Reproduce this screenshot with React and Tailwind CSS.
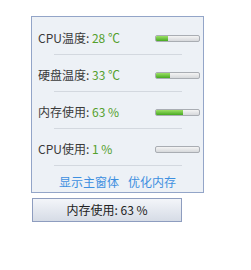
const font = { fontFamily: '"Microsoft YaHei", "Noto Sans CJK SC", "Noto Sans", sans-serif' };

const rows = [
  { label: 'CPU温度', value: '28 ℃', pct: 28 },
  { label: '硬盘温度', value: '33 ℃', pct: 33 },
  { label: '内存使用', value: '63 %', pct: 63 },
  { label: 'CPU使用', value: '1 %', pct: 1 },
];

function Bar({ pct }) {
  return (
    <div className="relative h-[7px] w-[45px] overflow-hidden rounded-[2px] border border-[#a9adb3] bg-gradient-to-b from-[#f4f4f4] to-[#d6d8db]">
      <div
        className="h-full bg-gradient-to-b from-[#9be064] to-[#45a91f]"
        style={{ width: `${pct < 3 ? 0 : pct}%` }}
      />
    </div>
  );
}

export default function App() {
  return (
    <div className="h-[270px] w-[251px] bg-white pl-[31px] pt-[16px] text-[12px]" style={font}>
      <div className="w-[173px] border border-[#93a5c8] bg-[#edf1f6] pt-px">
        {rows.map((r) => (
          <div key={r.label}>
            <div className="flex h-[36px] items-center justify-between pl-[6px] pr-[3px] pt-[4px]">
              <div className="leading-none text-[#3a3a3a]">
                {r.label}: <span className="text-[#54a02c]">{r.value}</span>
              </div>
              <Bar pct={r.pct} />
            </div>
            <div className="ml-[22px] mr-[21px] h-px bg-[#d3d8df]" />
          </div>
        ))}
        <div className="flex h-[26px] items-center justify-center gap-[9px] pt-[6px] leading-none text-[#3d8fe0]">
          <span>显示主窗体</span>
          <span>优化内存</span>
        </div>
      </div>
      <div className="mt-[5px] ml-px flex h-[24px] w-[150px] items-center justify-center border border-[#8e9dbf] bg-gradient-to-b from-[#f3f5f9] to-[#d6dce6] text-[#222]">
        内存使用: 63 %
      </div>
    </div>
  );
}
